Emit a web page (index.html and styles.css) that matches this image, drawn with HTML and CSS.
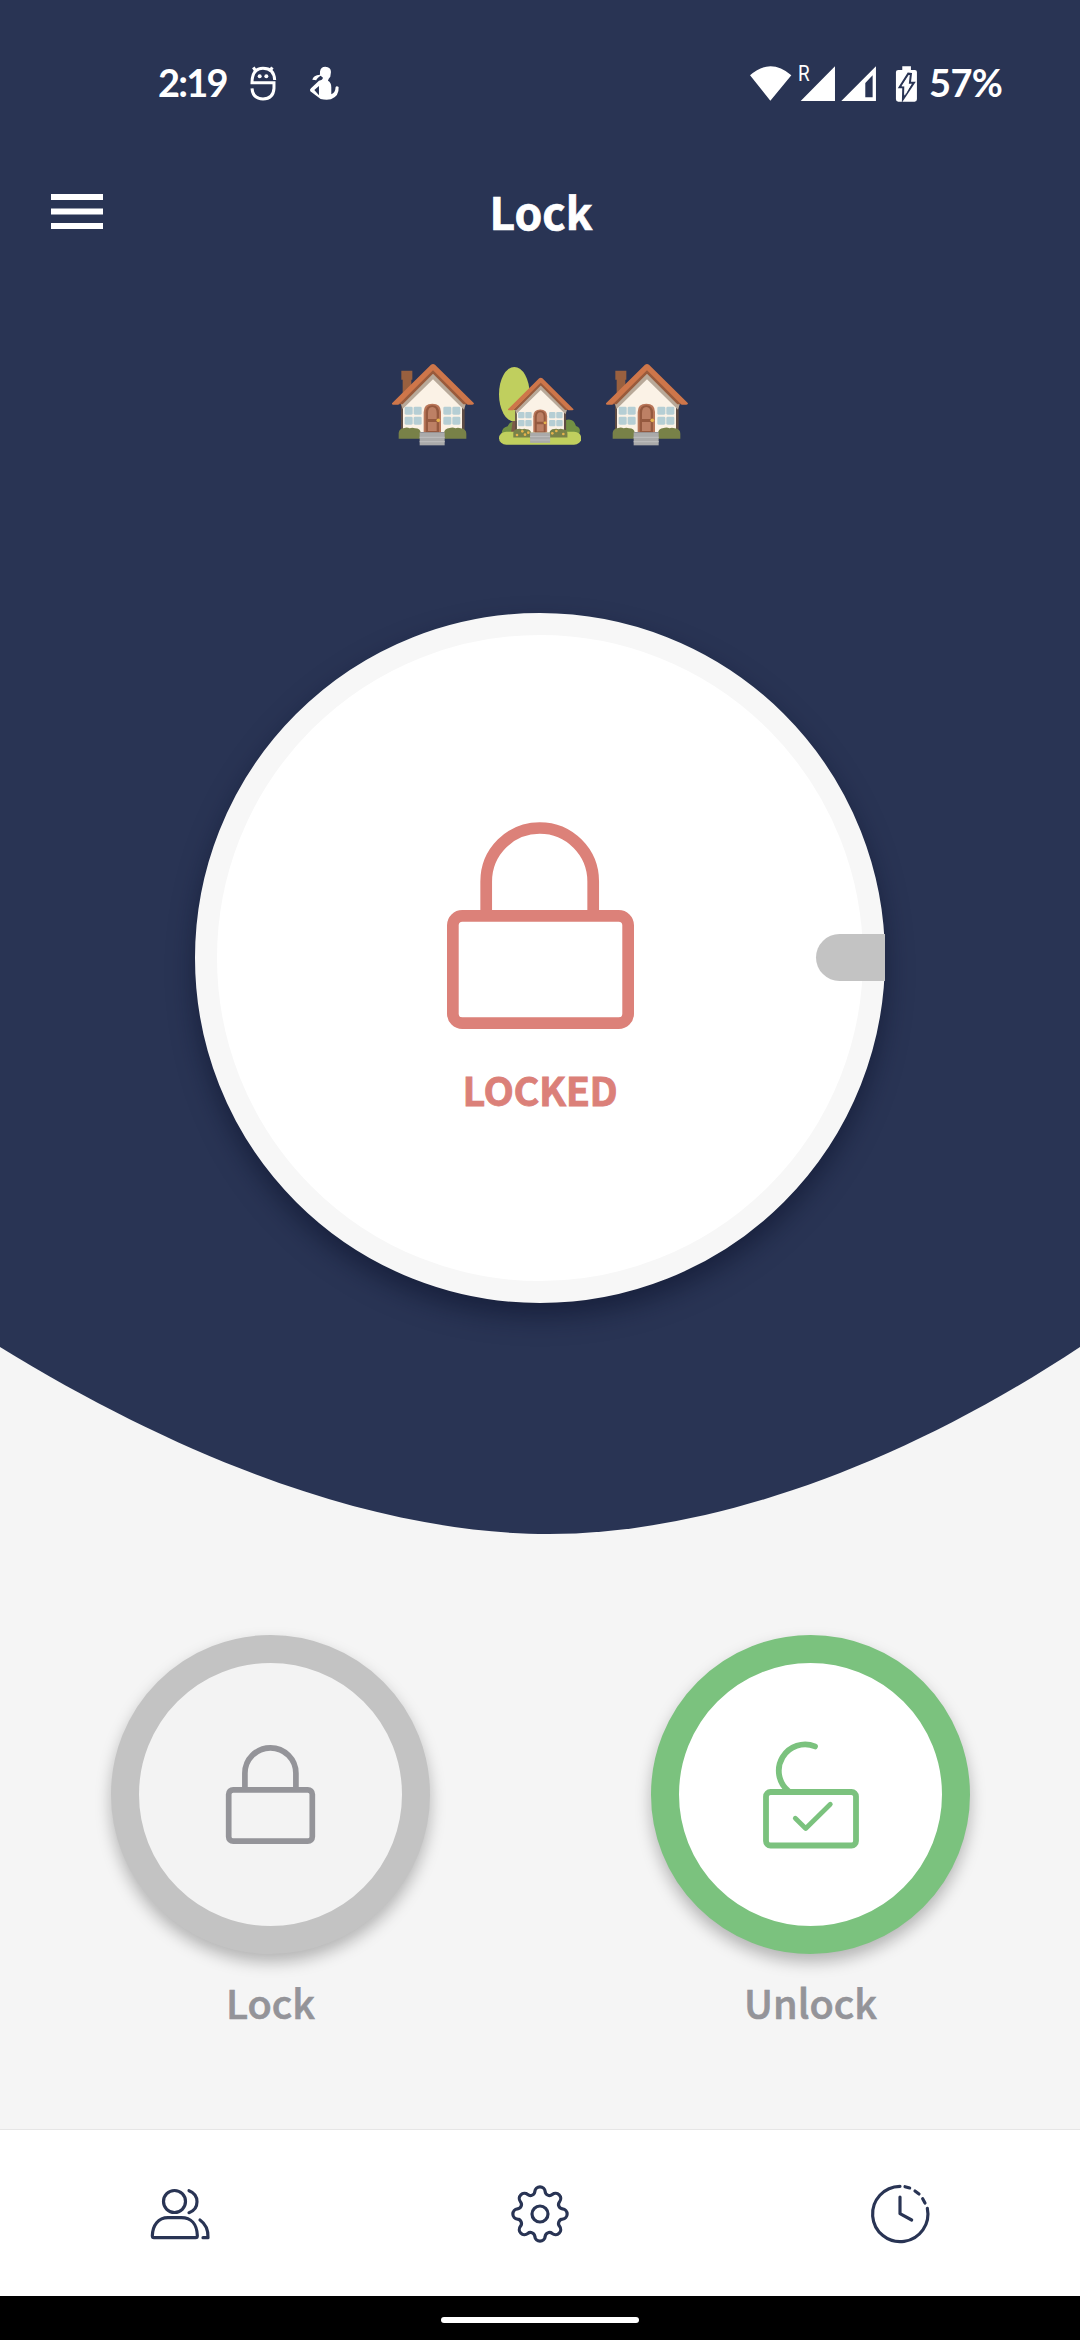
FILE: index.html
```html
<!DOCTYPE html>
<html lang="en">
<head>
<meta charset="utf-8">
<title>Lock</title>
<link rel="stylesheet" href="styles.css">
</head>
<body>
<svg width="0" height="0" class="defs" aria-hidden="true">
  <defs>
    <g id="cottage">
      <path fill="#99603f" d="M65 63H98V90H95V120L69 145V90H65Z"/>
      <use href="#cottage-front"/>
    </g>
    <g id="cottage-front">
      <path fill="#fbf2e6" d="M70 150L160 75L250 150V248H70Z"/>
      <path fill="#5f4c44" d="M64 160H70V240H64ZM247 160H255V240H247Z"/>
      <path fill="#b8a999" d="M160 66L260 158L253 180L160 89L69 178L62 158Z"/>
      <path fill="#995b3c" d="M160 59L264 164H251L160 72L69 164H56Z"/>
      <path fill="#ce764a" d="M154 45Q160 41 166 45L283 161Q283 165 278 165H264L160 62L56 165H40Q36 164 37 161Z"/>
      <g fill="#b5ced4"><rect x="75" y="171" width="24" height="24" rx="4"/><rect x="102" y="171" width="24" height="24" rx="4"/><rect x="75" y="201" width="24" height="24" rx="4"/><rect x="102" y="201" width="24" height="24" rx="4"/><rect x="191" y="171" width="24" height="24" rx="4"/><rect x="218" y="171" width="24" height="24" rx="4"/><rect x="191" y="201" width="24" height="24" rx="4"/><rect x="218" y="201" width="24" height="24" rx="4"/></g>
      <path fill="#b97659" d="M132 248V187Q132 162 158 162Q184 162 184 187V248Z"/>
      <path fill="#95593f" d="M138 248V190Q138 167 158 167Q178 167 178 190V248Z"/>
      <path fill="#bd8065" d="M145 208V190Q145 172 158 172Q171 172 171 190V208ZM145 217H171V244H145Z"/>
      <circle cx="176" cy="212" r="5.500" fill="#e6b34c"/>
      <path fill="#788148" d="M57 267V250Q58 236 74 235Q82 232 90 236Q98 232 106 236Q123 236 123 250V267ZM193 267V250Q194 236 210 235Q220 232 227 236Q235 232 243 236Q260 238 260 252V267Z"/>
      <path fill="#aaa" d="M120 248H195V287H120Z"/>
      <path fill="#bbb" d="M120 261H195V265H120ZM120 274H195V278H120Z"/>
    </g>
  </defs>
</svg>
<div class="screen">
  <header class="hero">
    <div class="status">
      <span class="time">2:19</span>
      <svg class="app-icons" viewBox="325 40 280 120">
        <g fill="none" stroke="#fff" stroke-width="9"><path d="M405 91Q403 56 370 56Q337 56 337 99H403V116Q401 147 370 148Q339 147 337 116"/><path stroke-width="9" d="M349 65L341 53M390 65L398 53"/></g>
        <circle cx="360" cy="80" r="6" fill="#fff"/><circle cx="380" cy="80" r="6" fill="#fff"/>
        <path fill="#fff" fill-rule="evenodd" d="M541 66Q543 51 557 51Q574 52 574 67L572 81Q566 87 565 93Q575 98 575 113V134Q587 130 588 112Q591 107 597 112Q599 139 574 149Q559 152 543 148L512 125Q509 121 514 116L538 93Q549 91 550 84L543 78Q531 86 530 92L518 90Q521 76 541 75ZM524 121L538 137V109Z"/>
      </svg>
      <svg class="radio-icons" viewBox="57 15 505 160">
        <path fill="#fff" d="M118 149L57 73Q118 19 181 73ZM209 150L312 46V150ZM331 150L435 46V150Z"/>
        <path fill="#293454" d="M403 96L425 73V139H403Z"/>
        <text class="roaming" x="201" y="90" textLength="35" lengthAdjust="spacingAndGlyphs">R</text>
        <path fill="#fff" d="M514 46H540V57H552Q558 57 558 63V145Q558 152 551 152H502Q495 152 495 145V63Q495 57 502 57H514Z"/>
        <path fill="#fff" stroke="#293454" stroke-width="6" d="M532 68L506 109H517L516 145L549 95H537L540 69Z"/>
        <path fill="#fff" d="M529 80L513 106H524L523 133L541 100H529Z"/>
      </svg>
      <span class="percent">57%</span>
    </div>
    <div class="appbar">
      <svg class="menu" viewBox="0 0 52 36"><path fill="#fff" d="M0 0H52V6H0ZM0 14.500H52V20.500H0ZM0 29H52V35H0Z"/></svg>
      <h1 class="title">Lock</h1>
    </div>
    <div class="houses">
      <svg class="house" viewBox="37 43 246 246"><use href="#cottage"/></svg>
      <svg class="house" viewBox="357 43 246 246">
        <ellipse cx="403" cy="134" rx="46" ry="82" fill="#c0cf5e"/>
        <path fill="#729043" d="M365 255Q364 234 383 230Q390 212 410 216V255ZM555 212Q580 203 588 229Q604 233 598 252H555Z"/>
        <path fill="#7c5a48" d="M398 214H407V250H393Z"/>
        <rect x="357" y="246" width="247" height="39" rx="22" fill="#c0cf5e"/>
        <use href="#cottage-front" transform="translate(354.300 50) scale(.8)"/>
        <g fill="#e6b34c"><circle cx="411" cy="256" r="4"/><circle cx="427" cy="245" r="4"/><circle cx="435" cy="255" r="4"/><circle cx="445" cy="249" r="4"/><circle cx="517" cy="251" r="4"/><circle cx="529" cy="244" r="4"/><circle cx="550" cy="253" r="4"/></g>
      </svg>
      <svg class="house" viewBox="37 43 246 246"><use href="#cottage"/></svg>
    </div>
    <div class="dial">
      <svg class="dial-lock" viewBox="447 822 187 207"><g fill="none" stroke="#dc8179" stroke-width="11.700"><path d="M486.200 912V881.500A53.500 53.500 0 0 1 593.200 881.500V912"/><rect x="452.850" y="915.850" width="175.300" height="107.300" rx="9.500"/></g></svg>
      <span class="state">LOCKED</span>
      <span class="knob"></span>
    </div>
  </header>
  <svg class="curve" viewBox="0 1347 1080 187"><path fill="#293454" d="M0 1347C200 1470 390 1534 549 1534C700 1534 890 1473 1080 1347Z"/></svg>
  <main class="actions">
    <div class="action">
      <div class="ring"><svg class="action-icon" viewBox="219 1740 102 112"><g fill="none" stroke="#949499" stroke-width="5.700"><path d="M244.900 1788V1773.300A25.500 25.500 0 0 1 295.900 1773.300V1788"/><rect x="228.700" y="1789.800" width="83.600" height="51.400" rx="4.500"/></g></svg></div>
      <span class="label">Lock</span>
    </div>
    <div class="action">
      <div class="ring green"><svg class="action-icon" viewBox="759 1740 102 112"><g fill="none" stroke="#7bc27e" stroke-width="5.800" stroke-linecap="round" stroke-linejoin="round"><path d="M815 1746.400A26.300 26.300 0 0 0 788.300 1791"/><rect x="766" y="1792" width="90" height="53.500" rx="4.500"/><path stroke-width="4.800" d="M795.300 1818.300L805.700 1828.500L830.300 1804.200"/></g></svg></div>
      <span class="label">Unlock</span>
    </div>
  </main>
  <nav class="tabs">
    <svg class="tab" viewBox="0 0 300 300"><g class="line"><circle cx="133.500" cy="124.500" r="33"/><path d="M72 233H197Q202 233 202 227C201 192 183 173 154 173H114C85 173 68 195 67 227Q67 233 72 233Z"/><path d="M177 92C209 104 209 147 177 158M210 180C227 192 235 211 234 233H219"/></g></svg>
    <svg class="tab" viewBox="-50 -54 100 100"><g class="line fine"><circle r="8"/><path d="M-5.170-22.500A5.200 5.200 0 0 1 5.170-22.500A4.300 4.300 0 0 0 12.260-19.570A5.200 5.200 0 0 1 19.570-12.260A4.300 4.300 0 0 0 22.500-5.170A5.200 5.200 0 0 1 22.500 5.170A4.300 4.300 0 0 0 19.570 12.260A5.200 5.200 0 0 1 12.260 19.570A4.300 4.300 0 0 0 5.170 22.500A5.200 5.200 0 0 1-5.170 22.500A4.300 4.300 0 0 0-12.260 19.570A5.200 5.200 0 0 1-19.570 12.260A4.300 4.300 0 0 0-22.500 5.170A5.200 5.200 0 0 1-22.500-5.170A4.300 4.300 0 0 0-19.570-12.260A5.200 5.200 0 0 1-12.260-19.570A4.300 4.300 0 0 0-5.170-22.500Z"/></g></svg>
    <svg class="tab" viewBox="0 0 300 300"><g class="line"><path d="M150 79A83 83 0 1 0 232 145M165 80L179 84M195 93L207 102M218 116L225 129M150 111V161L185 180"/></g></svg>
  </nav>
  <footer class="gesture"><span class="pill"></span></footer>
</div>
</body>
</html>
```
FILE: styles.css
```css
* { box-sizing: border-box; }
body { margin: 0; background: #f5f5f5; font-family: "Noto Sans CJK JP", "Noto Sans", sans-serif; }
svg { display: block; flex: none; }
.defs { position: absolute; }
.screen { width: 1080px; height: 2340px; display: flex; flex-direction: column; overflow: hidden; background: #f5f5f5; }

.hero { height: 1347px; background: #293454; display: flex; flex-direction: column; align-items: center; flex: none; }
.status { width: 100%; height: 166px; padding-left: 158px; display: flex; align-items: center; color: #fff; font: 700 38px/40px Lato, sans-serif; }
.time { width: 90px; padding-bottom: 2px; letter-spacing: -1.8px; }
.app-icons { width: 93.300px; height: 40px; }
.radio-icons { width: 168.300px; height: 53.300px; margin-left: 408.500px; overflow: visible; }
.roaming { font: 400 64px Roboto, sans-serif; fill: #fff; }
.percent { margin-left: 11px; padding-bottom: 2px; letter-spacing: -.7px; white-space: nowrap; }

.appbar { width: 100%; height: 92px; display: grid; grid-template-columns: 1fr auto 1fr; align-items: center; padding: 0 51px; }
.menu { width: 52px; height: 36px; }
.title { margin: 0; padding: 0 0 2px 2px; font-size: 44.500px; line-height: 60px; font-weight: 700; color: #fff; -webkit-text-stroke: .7px #fff; }

.houses { margin-top: 106px; display: flex; gap: 25px; }
.house { width: 82px; height: 82px; }

.dial { position: relative; width: 690px; height: 690px; margin-top: 167px; border: 22px solid #f7f7f7; border-radius: 50%; background: #fff; display: flex; flex-direction: column; align-items: center; padding-top: 187px; box-shadow: 0 13px 26px rgba(10, 16, 40, .52); }
.dial-lock { width: 187px; height: 207px; }
.state { margin-top: 30px; font-size: 39.500px; letter-spacing: -.4px; line-height: 60px; font-weight: 700; color: #db8079; -webkit-text-stroke: .8px #db8079; }
.knob { position: absolute; right: -22px; top: 299px; width: 69px; height: 47px; background: #c3c3c3; border-radius: 24px 0 0 24px; }
.curve { width: 1080px; height: 187px; }

.actions { height: 595px; flex: none; padding-top: 101px; display: flex; }
.action { flex: 1; display: flex; flex-direction: column; align-items: center; }
.ring { width: 319px; height: 319px; border-radius: 50%; border: 28px solid #c3c3c3; background: #f3f3f3; display: flex; align-items: flex-start; justify-content: center; padding-top: 77px; box-shadow: 0 8px 16px rgba(0, 0, 0, .27); }
.ring.green { border-color: #7bc27e; background: #fff; }
.action-icon { width: 102px; height: 112px; }
.label { margin-top: 18px; padding-left: 1px; font-size: 39.500px; line-height: 60px; font-weight: 500; color: #949499; -webkit-text-stroke: .7px #949499; }

.tabs { height: 167px; flex: none; background: #fff; border-top: 1px solid #e6e6e6; padding-bottom: 6px; display: flex; align-items: center; justify-content: space-around; }
.tab { width: 100px; height: 100px; }
.line { fill: none; stroke: #293454; stroke-width: 9.500; stroke-linecap: round; stroke-linejoin: round; }
.fine { stroke-width: 3.200; }
.gesture { flex: 1; background: #000; display: flex; align-items: center; justify-content: center; padding-top: 3px; }
.pill { width: 198px; height: 6px; border-radius: 3px; background: #fff; }
```
